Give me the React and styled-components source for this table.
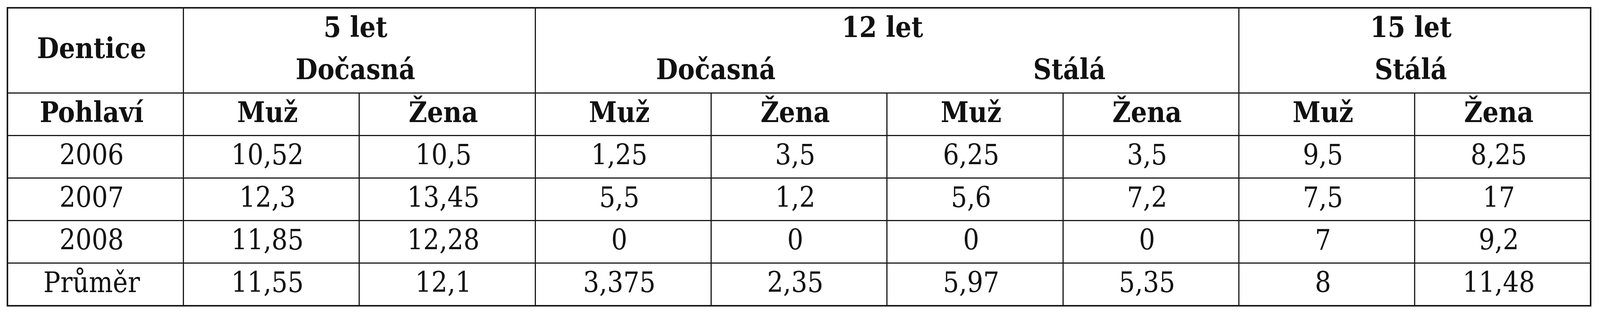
import React from "react";
import styled, { createGlobalStyle } from "styled-components";

const Global = createGlobalStyle`
  html, body { margin: 0; padding: 0; background: #ffffff; overflow: hidden; }
  body { font-family: "DejaVu Serif Condensed", "DejaVu Serif", serif; color: #111111; }
`;

const Page = styled.div`
  box-sizing: border-box;
  width: 100%;
  padding: 18px 0.53% 0 0.42%;
`;

const Table = styled.table`
  width: 100%;
  table-layout: fixed;
  border-collapse: collapse;
  border: 4px solid #1a1a1a;
  font-family: "DejaVu Serif Condensed", "DejaVu Serif", serif;
  font-stretch: condensed;
  font-size: 72px;
  line-height: 96px;
  color: #111111;
`;

const Cell = styled.td`
  border: 3px solid #1a1a1a;
  text-align: center;
  vertical-align: middle;
  padding: 0 ${(p) => (p.$shift ? p.$shift : 20)}px ${(p) => (p.$tall ? 11 : 10)}px 0;
  font-weight: ${(p) => (p.$bold ? 700 : 400)};
  white-space: nowrap;
  overflow: hidden;
`;

const GroupCell = styled(Cell)`
  padding-bottom: 11px;
  vertical-align: top;
`;

const Line = styled.div`
  height: 96px;
  & + & {
    margin-top: 12px;
  }
`;

const SubLine = styled.div`
  display: grid;
  grid-template-columns: 1fr 1fr;
  margin-top: 12px;
  height: 96px;
`;

const SubLabel = styled.span`
  text-align: center;
  padding-left: ${(p) => p.$pad || 0}px;
`;

const rows = [
  ["2006", "10,52", "10,5", "1,25", "3,5", "6,25", "3,5", "9,5", "8,25"],
  ["2007", "12,3", "13,45", "5,5", "1,2", "5,6", "7,2", "7,5", "17"],
  ["2008", "11,85", "12,28", "0", "0", "0", "0", "7", "9,2"],
  ["Průměr", "11,55", "12,1", "3,375", "2,35", "5,97", "5,35", "8", "11,48"],
];

const genders = ["Muž", "Žena", "Muž", "Žena", "Muž", "Žena", "Muž", "Žena"];

export default function App() {
  return (
    <>
      <Global />
      <Page>
        <Table>
          <colgroup>
            {Array.from({ length: 9 }).map((_, i) => (
              <col key={i} />
            ))}
          </colgroup>
          <thead>
            <tr>
              <Cell $bold $tall>Dentice</Cell>
              <GroupCell $bold colSpan={2}>
                <Line>5 let</Line>
                <Line>Dočasná</Line>
              </GroupCell>
              <GroupCell $bold colSpan={4} $shift={24}>
                <Line>12 let</Line>
                <SubLine>
                  <SubLabel $pad={34}>Dočasná</SubLabel>
                  <SubLabel $pad={70}>Stálá</SubLabel>
                </SubLine>
              </GroupCell>
              <GroupCell $bold colSpan={2}>
                <Line>15 let</Line>
                <Line>Stálá</Line>
              </GroupCell>
            </tr>
            <tr>
              <Cell $bold>Pohlaví</Cell>
              {genders.map((g, i) => (
                <Cell $bold key={i}>
                  {g}
                </Cell>
              ))}
            </tr>
          </thead>
          <tbody>
            {rows.map((r) => (
              <tr key={r[0]}>
                {r.map((v, i) => (
                  <Cell key={i}>{v}</Cell>
                ))}
              </tr>
            ))}
          </tbody>
        </Table>
      </Page>
    </>
  );
}
